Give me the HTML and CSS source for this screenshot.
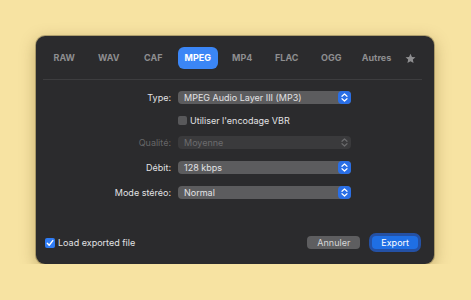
FILE: index.html
```html
<!DOCTYPE html>
<html lang="fr">
<head>
  <meta charset="UTF-8" />
  <meta name="viewport" content="width=device-width, initial-scale=1.0"/>
  <title>Exporter</title>
  <link rel="stylesheet" href="styles.css">
</head>
<body>

  <div class="dialog">
    <!-- Formats -->
    <div class="tabs">
      <span class="tab">RAW</span>
      <span class="tab">WAV</span>
      <span class="tab">CAF</span>
      <span class="tab active">MPEG</span>
      <span class="tab">MP4</span>
      <span class="tab">FLAC</span>
      <span class="tab">OGG</span>
      <span class="tab">Autres</span>
      <span class="tab star">
        <svg width="11" height="11" viewBox="0 0 24 24"><path d="M12 1.5l3.2 7 7.6.8-5.7 5.1 1.6 7.5L12 18l-6.7 3.9 1.6-7.5L1.2 9.3l7.6-.8z" fill="#8e8e90"/></svg>
      </span>
    </div>

    <div class="form">
      <label class="lbl">Type:</label>
      <div class="select">
        <span>MPEG Audio Layer III (MP3)</span>
        <span class="stepper"><svg width="7" height="9" viewBox="0 0 7 9"><path d="M1 3.3L3.5 1 6 3.3M1 5.7L3.5 8 6 5.7" fill="none" stroke="#fff" stroke-width="1.2" stroke-linecap="round" stroke-linejoin="round"/></svg></span>
      </div>

      <span></span>
      <div class="check-row">
        <span class="box"></span>
        <span>Utiliser l'encodage VBR</span>
      </div>

      <label class="lbl disabled">Qualité:</label>
      <div class="select off">
        <span>Moyenne</span>
        <span class="stepper"><svg width="7" height="9" viewBox="0 0 7 9"><path d="M1 3.3L3.5 1 6 3.3M1 5.7L3.5 8 6 5.7" fill="none" stroke="#6a6a6c" stroke-width="1.2" stroke-linecap="round" stroke-linejoin="round"/></svg></span>
      </div>

      <label class="lbl">Débit:</label>
      <div class="select">
        <span>128 kbps</span>
        <span class="stepper"><svg width="7" height="9" viewBox="0 0 7 9"><path d="M1 3.3L3.5 1 6 3.3M1 5.7L3.5 8 6 5.7" fill="none" stroke="#fff" stroke-width="1.2" stroke-linecap="round" stroke-linejoin="round"/></svg></span>
      </div>

      <label class="lbl">Mode stéréo:</label>
      <div class="select">
        <span>Normal</span>
        <span class="stepper"><svg width="7" height="9" viewBox="0 0 7 9"><path d="M1 3.3L3.5 1 6 3.3M1 5.7L3.5 8 6 5.7" fill="none" stroke="#fff" stroke-width="1.2" stroke-linecap="round" stroke-linejoin="round"/></svg></span>
      </div>
    </div>

    <div class="footer">
      <div class="load">
        <span class="box on"><svg width="8" height="8" viewBox="0 0 8 8"><path d="M1.3 4.2L3.2 6.2 6.8 1.6" fill="none" stroke="#fff" stroke-width="1.4" stroke-linecap="round" stroke-linejoin="round"/></svg></span>
        <span>Load exported file</span>
      </div>
      <div class="buttons">
        <button type="button" class="btn">Annuler</button>
        <button type="button" class="btn primary">Export</button>
      </div>
    </div>
  </div>

</body>
</html>
```

FILE: styles.css
```css
:root {
  --panel: #2b2b2d;
  --field: #5c5c5e;
  --blue: #3b86f6;
  --text: #e2e2e4;
  --muted: #8e8e90;
}

* {
  box-sizing: border-box;
}

body {
  margin: 0;
  padding: 36px 0 0 36px;
  background: #f7e3a2;
  font-family: Inter, 'Liberation Sans', sans-serif;
  font-size: 9px;
  color: var(--text);
}

.dialog {
  width: 398px;
  height: 228px;
  background: var(--panel);
  border-radius: 9px;
  box-shadow: 0 4px 16px rgba(90, 60, 0, 0.35), 0 0 0 1px rgba(0, 0, 0, 0.25);
  display: flex;
  flex-direction: column;
}

.tabs {
  display: grid;
  grid-template-columns: repeat(7, 44.5px) 46px 21px;
  justify-items: center;
  align-items: center;
  height: 22px;
  margin: 11px 0 0 6px;
}

.tab {
  padding: 0 8px;
  height: 22px;
  line-height: 22px;
  border-radius: 6px;
  font-weight: 700;
  color: var(--muted);
}

.tab.active {
  padding: 0 7px;
  background: var(--blue);
  color: #fff;
}

.tab.star {
  padding: 0 3px;
  display: flex;
  align-items: center;
}

.form {
  border-top: 1px solid #3d3d3f;
  margin: 10px 12px 0 7px;
  padding: 11px 0 0;
  display: grid;
  grid-template-columns: 128px 173px;
  grid-template-rows: 13px 8px 13px 13px 13px;
  column-gap: 7px;
  row-gap: 12px;
  align-items: center;
}

.lbl {
  text-align: right;
  color: var(--text);
}

.lbl.disabled {
  color: #666668;
}

.select {
  height: 13px;
  border-radius: 4px;
  background: var(--field);
  display: flex;
  align-items: center;
  justify-content: space-between;
  padding-left: 6px;
  color: var(--text);
}

.select.off {
  background: #3a3a3c;
  color: #6c6c6e;
}

.stepper {
  width: 13px;
  height: 13px;
  border-radius: 4px;
  background: #2a6fe6;
  display: flex;
  align-items: center;
  justify-content: center;
}

.select.off .stepper {
  background: transparent;
}

.check-row {
  display: flex;
  align-items: center;
  gap: 3px;
}

.box {
  width: 9px;
  height: 9px;
  border-radius: 2px;
  background: #58585a;
  flex: none;
}

.footer {
  margin-top: auto;
  padding: 0 16px 15px 9px;
  display: flex;
  align-items: center;
  justify-content: space-between;
}

.load {
  display: flex;
  align-items: center;
  gap: 3px;
}

.box.on {
  width: 10px;
  height: 10px;
  background: #2f7cf5;
  display: flex;
  align-items: center;
  justify-content: center;
}

.buttons {
  display: flex;
  gap: 12px;
}

.btn {
  border: none;
  height: 13px;
  padding: 0 10px;
  border-radius: 4px;
  font: inherit;
  color: #d6d6d8;
  background: #5e5e60;
  line-height: 13px;
}

.btn.primary {
  background: #1f6fe4;
  color: #fff;
  padding: 0 9px;
  box-shadow: 0 0 0 3px rgba(35, 95, 205, 0.75);
}
```
